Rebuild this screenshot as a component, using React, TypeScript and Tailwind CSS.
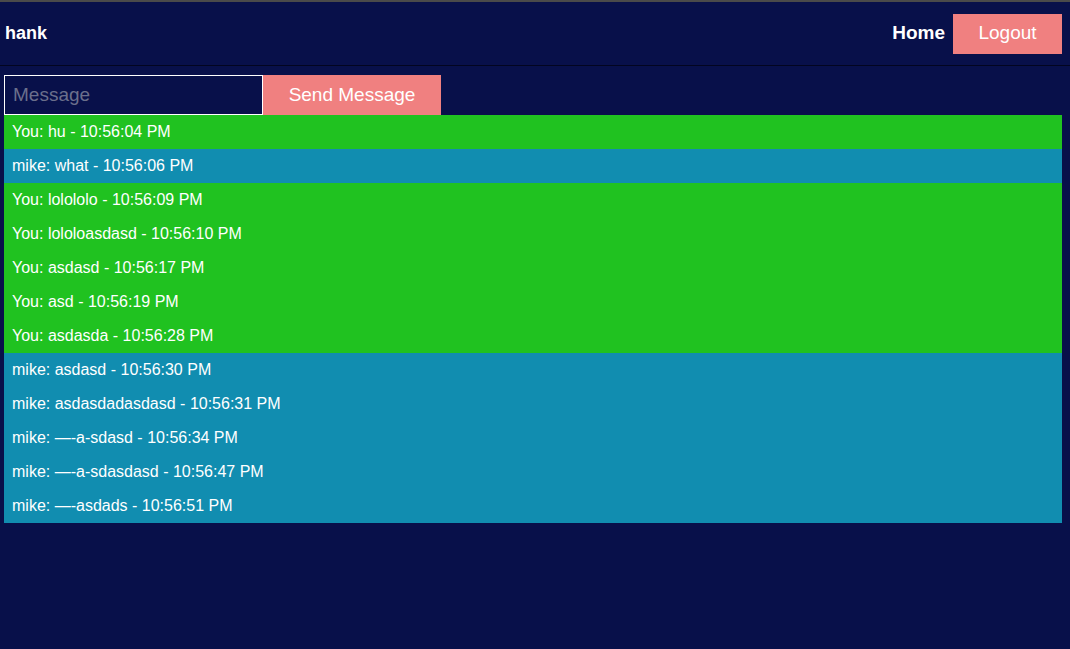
import React, { useState } from 'react';

type Msg = { from: string; text: string; time: string };

const messages: Msg[] = [
  { from: 'You', text: 'hu', time: '10:56:04 PM' },
  { from: 'mike', text: 'what', time: '10:56:06 PM' },
  { from: 'You', text: 'lolololo', time: '10:56:09 PM' },
  { from: 'You', text: 'lololoasdasd', time: '10:56:10 PM' },
  { from: 'You', text: 'asdasd', time: '10:56:17 PM' },
  { from: 'You', text: 'asd', time: '10:56:19 PM' },
  { from: 'You', text: 'asdasda', time: '10:56:28 PM' },
  { from: 'mike', text: 'asdasd', time: '10:56:30 PM' },
  { from: 'mike', text: 'asdasdadasdasd', time: '10:56:31 PM' },
  { from: 'mike', text: '\u2014-a-sdasd', time: '10:56:34 PM' },
  { from: 'mike', text: '\u2014-a-sdasdasd', time: '10:56:47 PM' },
  { from: 'mike', text: '\u2014-asdads', time: '10:56:51 PM' },
];

const App: React.FC = () => {
  const [draft, setDraft] = useState('');

  return (
    <div className="min-h-[649px] bg-[#08104a] border-t-2 border-[#4a4a4a] font-['Liberation_Sans',Arial,sans-serif] text-white">
      {/* top bar */}
      <header className="h-[64px] flex items-center justify-between pl-[5px] pr-[8px] border-b border-[#020520]">
        <span className="text-[18px] font-bold">hank</span>
        <nav className="flex items-center gap-[8px]">
          <a href="#" className="text-[19px] font-bold">Home</a>
          <button className="w-[109px] h-[40px] bg-[#f08080] text-[19px]">Logout</button>
        </nav>
      </header>

      <main className="pl-[4px] pr-[8px] pt-[9px]">
        <form className="flex" onSubmit={(e) => e.preventDefault()}>
          <input
            value={draft}
            onChange={(e) => setDraft(e.target.value)}
            placeholder="Message"
            className="w-[259px] h-[40px] border border-white bg-transparent px-[8px] text-[19px] text-white placeholder:text-[#6b6f8c] outline-none"
          />
          <button className="w-[178px] h-[40px] bg-[#f08080] text-[19px]">Send Message</button>
        </form>

        <ul>
          {messages.map((m, i) => (
            <li
              key={i}
              className={
                'h-[34px] flex items-center px-[8px] text-[16px] ' +
                (m.from === 'You' ? 'bg-[#20c220]' : 'bg-[#118db0]')
              }
            >
              {m.from}: {m.text} - {m.time}
            </li>
          ))}
        </ul>
      </main>
    </div>
  );
};

export default App;
